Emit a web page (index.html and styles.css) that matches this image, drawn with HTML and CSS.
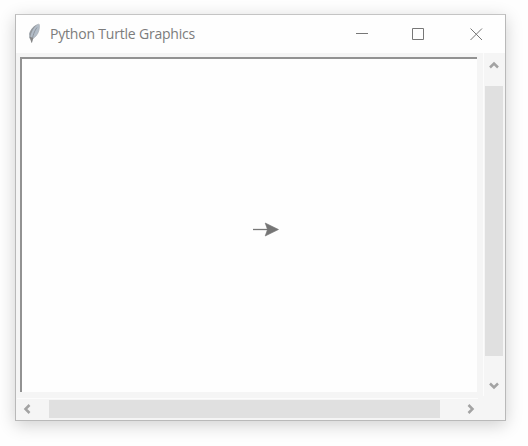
FILE: index.html
```html
<!DOCTYPE html>
<html lang="en">
<head>
<meta charset="utf-8">
<title>Python Turtle Graphics</title>
<link rel="stylesheet" href="styles.css">
</head>
<body>
<main class="window">
  <header class="titlebar">
    <svg class="feather" width="14" height="22" viewBox="0 0 14 22">
      <path d="M11.600 1.200C8 2 4 6 2.500 10.500L2.600 15L4.500 17L9 13C12 9.500 12.800 5 12.300 1.500Z" fill="#b3bdc8" stroke="#a9afb5" stroke-width=".7"/>
      <path d="M11 1.600C7 3.500 4.300 9 3.300 14.500L2.500 11C3.800 6 7 2.500 11 1.600Z" fill="#92979c"/>
      <path d="M10 4.500C7.500 8 5.800 12 4.700 19.500" fill="none" stroke="#858b92" stroke-width=".8"/>
      <path d="M2.500 13.500L4.500 20L6.300 15Z" fill="#858585"/>
    </svg>
    <h1 class="title">Python Turtle Graphics</h1>
    <svg class="controls" width="132" height="20" viewBox="0 0 132 20">
      <path d="M2 9.500H14M58.500 4.500H69.500V15.500H58.500ZM116.500 4.500L128 16M128 4.500L116.500 16"/>
    </svg>
  </header>
  <section class="client">
    <div class="canvas">
      <svg class="turtle" width="28" height="16" viewBox="0 0 28 16">
        <path d="M1 7.500H16" stroke="#777" stroke-width="1.300"/>
        <path d="M26.500 7.500L13.200 1L15.500 7.500L13.200 14Z" fill="#757575" stroke="#757575" stroke-width=".6"/>
      </svg>
    </div>
    <div class="scroll vertical">
      <svg class="chevron" width="12" height="10" viewBox="0 0 12 10"><path d="M2 7.500L6 3.500L10 7.500"/></svg>
      <div class="thumb"></div>
      <svg class="chevron" width="12" height="10" viewBox="0 0 12 10"><path d="M2 2.500L6 6.500L10 2.500"/></svg>
    </div>
    <div class="scroll horizontal">
      <svg class="chevron" width="10" height="12" viewBox="0 0 10 12"><path d="M7.500 2L3.500 6L7.500 10"/></svg>
      <div class="thumb"></div>
      <svg class="chevron" width="10" height="12" viewBox="0 0 10 12"><path d="M2.500 2L6.500 6L2.500 10"/></svg>
    </div>
  </section>
</main>
</body>
</html>
```
FILE: styles.css
```css
* { box-sizing: border-box; }
body {
  margin: 0;
  padding: 14px 0 0 15px;
  height: 446px;
  overflow: hidden;
  background: #fefefe;
}
.window {
  display: flex;
  flex-direction: column;
  width: 491px;
  height: 407px;
  border: 1px solid #b9b9b9;
  border-top-color: #c4c4c4;
  background: #f5f5f5;
  box-shadow: 0 4px 16px rgba(0, 0, 0, .19);
}
.titlebar {
  display: flex;
  align-items: center;
  height: 38px;
  padding: 0 19px 0 11px;
  background: #fefefe;
}
.feather { flex: none; margin-right: 9px; }
.title {
  flex: 1;
  margin: 0;
  color: #7c7c7c;
  font: 400 14px/20px "Open Sans", "Noto Sans", sans-serif;
  letter-spacing: -.2px;
  white-space: nowrap;
}
.controls { flex: none; fill: none; stroke: #777; stroke-width: 1; }
.client {
  flex: 1;
  display: grid;
  grid-template-columns: 457px 19px;
  grid-template-rows: 335px 20px;
  column-gap: 7px;
  row-gap: 7px;
  padding: 4px 0 0 4px;
}
.canvas {
  display: flex;
  align-items: center;
  justify-content: center;
  padding: 9px 0 0 32px;
  border: solid #929292;
  border-width: 2px 0 0 2px;
  background: #fefefe;
}
.scroll { display: flex; align-items: center; }
.thumb { background: #e0e0e0; }
.vertical {
  flex-direction: column;
  width: 19px;
  height: 343px;
  margin-top: -4px;
  box-shadow: -1px 0 #fcfcfc;
}
.vertical .thumb {
  align-self: flex-start;
  width: 18px;
  height: 270px;
  margin: 16px 0 25px 1px;
}
.vertical .chevron:first-child { margin-top: 7px; }
.horizontal {
  height: 20px;
  width: 461px;
  margin-left: -3px;
  box-shadow: 0 -1px #fcfcfc;
}
.horizontal .chevron:first-child { margin-left: 5px; }
.horizontal .thumb { width: 391px; height: 18px; margin: 0 26px 0 17px; }
.chevron {
  flex: none;
  fill: none;
  stroke: #a3a3a3;
  stroke-width: 2.500;
}
```
